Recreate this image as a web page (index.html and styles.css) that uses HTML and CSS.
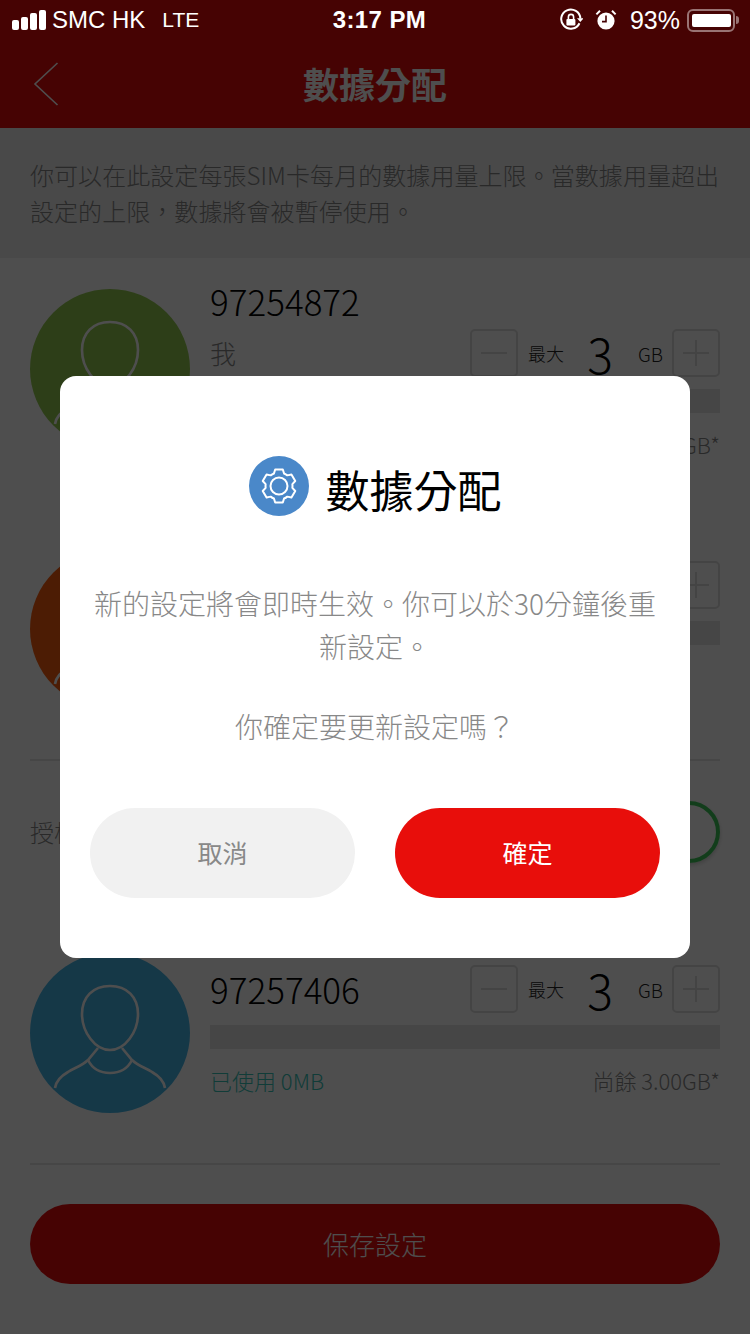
FILE: index.html
```html
<!DOCTYPE html>
<html lang="zh-Hant">
<head>
    <meta charset="UTF-8">
    <meta name="viewport" content="width=device-width, initial-scale=1.0">
    <title>數據分配</title>
    <link rel="stylesheet" href="styles.css">
</head>
<body>
    <header class="header">
        <div class="status-bar">
            <div class="status-left">
                <div class="signal"><i class="s1"></i><i class="s2"></i><i class="s3"></i><i class="s4"></i></div>
                <span class="carrier">SMC HK</span>
                <span class="network">LTE</span>
            </div>
            <div class="status-time">3:17 PM</div>
            <div class="status-right">
                <svg class="status-icon" width="24" height="24" viewBox="0 0 24 24">
                    <path d="M20.5 15.2A9.6 9.6 0 1 1 21.4 10.6" fill="none" stroke="#fff" stroke-width="2"/>
                    <path d="M18 10.2h6.6l-3.3 3.8z" fill="#fff"/>
                    <rect x="7.4" y="11" width="9" height="6.6" rx="1" fill="#fff"/>
                    <path d="M9.4 11V9a2.6 2.6 0 0 1 5.2 0v2" fill="none" stroke="#fff" stroke-width="1.6"/>
                </svg>
                <svg class="status-icon alarm" width="22" height="22" viewBox="0 0 22 22">
                    <circle cx="11" cy="12" r="8.6" fill="#fff"/>
                    <path d="M11 6.6V12.6H7" fill="none" stroke="#450204" stroke-width="1.6"/>
                    <path d="M1.4 5.4 5 1.8M20.6 5.4 17 1.8" stroke="#fff" stroke-width="2"/>
                </svg>
                <span class="battery-text">93%</span>
                <div class="battery"><div class="battery-level"></div></div>
                <div class="battery-nub"></div>
            </div>
        </div>
        <div class="nav-bar">
            <svg class="back" width="26" height="44" viewBox="0 0 26 44">
                <path d="M24.5 1 2 22l22.5 21" fill="none" stroke="#fff" stroke-width="1.6"/>
            </svg>
            <div class="nav-title">數據分配</div>
        </div>
    </header>

    <section class="intro">你可以在此設定每張SIM卡每月的數據用量上限。當數據用量超出設定的上限，數據將會被暫停使用。</section>

    <section class="card card-first">
        <div class="card-main">
            <svg class="avatar green" viewBox="0 0 160 160"><use href="#person"/></svg>
            <div class="info">
                <div class="number number-alone">97254872</div>
                <div class="row">
                    <span class="name">我</span>
                    <div class="stepper">
                        <div class="step-btn"><i class="dash"></i></div>
                        <span class="step-label">最大</span>
                        <span class="step-value">3</span>
                        <span class="step-unit">GB</span>
                        <div class="step-btn step-plus"><i class="dash"></i><i class="bar-v"></i></div>
                    </div>
                </div>
                <div class="usage-bar"></div>
                <div class="usage">
                    <span class="used">已使用 0MB</span>
                    <span class="left">尚餘 3.00GB*</span>
                </div>
            </div>
        </div>
    </section>

    <section class="card card-second">
        <div class="card-main">
            <svg class="avatar orange" viewBox="0 0 160 160"><use href="#person"/></svg>
            <div class="info info-row">
                <div class="row row-end">
                    <div class="step-btn"><i class="dash"></i><i class="bar-v"></i></div>
                </div>
                <div class="usage-bar"></div>
            </div>
        </div>
        <div class="divider"></div>
        <div class="auth-row">
            <span class="auth-label">授權</span>
            <div class="auth-ring"></div>
        </div>
    </section>

    <section class="card card-third">
        <div class="card-main">
            <svg class="avatar blue" viewBox="0 0 160 160"><use href="#person"/></svg>
            <div class="info info-row">
                <div class="row">
                    <span class="number">97257406</span>
                    <div class="stepper">
                        <div class="step-btn"><i class="dash"></i></div>
                        <span class="step-label">最大</span>
                        <span class="step-value">3</span>
                        <span class="step-unit">GB</span>
                        <div class="step-btn step-plus"><i class="dash"></i><i class="bar-v"></i></div>
                    </div>
                </div>
                <div class="usage-bar"></div>
                <div class="usage">
                    <span class="used">已使用 0MB</span>
                    <span class="left">尚餘 3.00GB*</span>
                </div>
            </div>
        </div>
        <div class="divider"></div>
        <div class="save-btn">保存設定</div>
    </section>

    <svg class="defs" width="0" height="0">
        <symbol id="person" viewBox="0 0 160 160">
            <g fill="none" stroke="#fff" stroke-width="2.6">
                <path d="M80 33c-17 0-28 11-28 28 0 18 13 36 28 36s28-18 28-36c0-17-11-28-28-28z"/>
                <path d="M68 95 58 107c-6 6-14 8-20 12-7 4-12 9-13 16M92 95l10 12c6 6 14 8 20 12 7 4 12 9 13 16"/>
                <path d="M58 107c4 8 12 13 22 13s18-5 22-13"/>
            </g>
        </symbol>
    </svg>

    <div class="overlay">
        <div class="modal">
            <div class="modal-head">
                <svg width="60" height="60" viewBox="0 0 60 60">
                    <circle cx="30" cy="30" r="30" fill="#4a88c9"/>
                    <path d="M24.94 17.48 26.18 13.44H33.82L35.06 17.48A13.5 13.5 0 0 1 38.31 19.36L42.43 18.41 46.26 25.03 43.37 28.12A13.5 13.5 0 0 1 43.37 31.88L46.26 34.97 42.43 41.59 38.31 40.64A13.5 13.5 0 0 1 35.06 42.52L33.82 46.56H26.18L24.94 42.52A13.5 13.5 0 0 1 21.69 40.64L17.57 41.59 13.74 34.97 16.63 31.88A13.5 13.5 0 0 1 16.63 28.12L13.74 25.03 17.57 18.41 21.69 19.36A13.5 13.5 0 0 1 24.94 17.48Z" fill="none" stroke="#fff" stroke-width="2" stroke-linejoin="round"/>
                    <circle cx="30" cy="30" r="8.5" fill="none" stroke="#fff" stroke-width="2"/>
                </svg>
                <div class="modal-title">數據分配</div>
            </div>
            <p class="modal-text">新的設定將會即時生效。你可以於30分鐘後重新設定。</p>
            <p class="modal-text modal-question">你確定要更新設定嗎？</p>
            <div class="modal-buttons">
                <div class="modal-btn btn-cancel">取消</div>
                <div class="modal-btn btn-ok">確定</div>
            </div>
        </div>
    </div>
</body>
</html>
```

FILE: styles.css
```css
* {
    box-sizing: border-box;
}
html, body {
    margin: 0;
    padding: 0;
}
body {
    position: relative;
    width: 750px;
    height: 1334px;
    overflow: hidden;
    background-color: #fff;
    font-family: "Noto Sans CJK TC", "Noto Sans", sans-serif;
    font-weight: 300;
    color: #888;
}

/* Header */
.header {
    height: 128px;
    background-color: #e60c0c;
}
.status-bar {
    position: relative;
    z-index: 2;
    height: 40px;
    padding: 0 11px 0 12px;
    display: flex;
    align-items: center;
    justify-content: space-between;
    color: #fff;
    font-family: "Liberation Sans", sans-serif;
    font-weight: 400;
}
.status-left {
    display: flex;
    align-items: center;
    width: 308px;
    font-size: 24px;
}
.signal {
    display: flex;
    align-items: flex-end;
    gap: 2px;
    height: 20px;
    margin-right: 6px;
}
.signal i {
    display: block;
    width: 7px;
    background-color: #fff;
    border-radius: 2px;
}
.s1 { height: 10px; }
.s2 { height: 13px; }
.s3 { height: 17px; }
.s4 { height: 20px; }
.network {
    margin-left: 17px;
    font-size: 21px;
}
.status-time {
    font-size: 24px;
    font-weight: 700;
    letter-spacing: 0.4px;
}
.status-right {
    display: flex;
    align-items: center;
    justify-content: flex-end;
    width: 300px;
}
.status-icon {
    display: block;
}
.alarm {
    margin-left: 12px;
}
.battery-text {
    margin-left: 13px;
    font-size: 25px;
}
.battery {
    width: 48px;
    height: 23px;
    margin-left: 7px;
    padding: 3px;
    border: 2px solid rgba(255, 255, 255, 0.45);
    border-radius: 6px;
}
.battery-level {
    width: 39px;
    height: 13px;
    background-color: #fff;
    border-radius: 2px;
}
.battery-nub {
    width: 3px;
    height: 8px;
    margin-left: 1px;
    background-color: rgba(255, 255, 255, 0.45);
    border-radius: 0 3px 3px 0;
}
.nav-bar {
    position: relative;
    height: 88px;
    display: flex;
    align-items: center;
    justify-content: center;
}
.back {
    position: absolute;
    left: 33px;
    top: 22px;
}
.nav-title {
    color: #fff;
    font-size: 36px;
    font-weight: 700;
    margin-top: -2px;
}

/* Intro */
.intro {
    height: 130px;
    padding: 29px 30px 0;
    background-color: #eee;
    font-size: 24px;
    line-height: 36px;
    letter-spacing: 0.06px;
}

/* Cards */
.card {
    padding: 0 30px;
    background-color: #fff;
}
.card-first {
    height: 231px;
    padding-top: 25px;
}
.card-second {
    height: 383px;
    margin-top: 20px;
    padding-top: 40px;
}
.card-third {
    height: 422px;
    margin-top: 20px;
    padding-top: 41px;
}
.card-main {
    display: flex;
    gap: 20px;
    margin-bottom: 50px;
}
.avatar {
    flex: none;
    width: 160px;
    height: 160px;
    border-radius: 50%;
}
.card-first .avatar {
    margin-top: 6px;
}
.green { background-color: #93cb50; }
.orange { background-color: #f75d0d; }
.blue { background-color: #46b7e9; }
.defs {
    position: absolute;
}
.info {
    flex: 1;
    min-width: 0;
}
.info-row {
    padding-top: 12px;
}
.number {
    color: #000;
    font-size: 35px;
    line-height: 46px;
}
.number-alone {
    height: 46px;
    line-height: 36px;
}
.row {
    display: flex;
    align-items: center;
    justify-content: space-between;
    height: 48px;
}
.row-end {
    justify-content: flex-end;
}
.name {
    font-size: 26px;
    margin-top: -2px;
}
.stepper {
    display: flex;
    align-items: center;
    width: 250px;
    height: 48px;
    color: #222;
}
.step-btn {
    position: relative;
    flex: none;
    width: 48px;
    height: 48px;
    border: 2px solid #ddd;
    border-radius: 5px;
}
.dash {
    position: absolute;
    left: 9px;
    right: 9px;
    top: 21px;
    height: 2px;
    background-color: #ddd;
}
.bar-v {
    position: absolute;
    top: 9px;
    bottom: 9px;
    left: 21px;
    width: 2px;
    background-color: #ddd;
}
.step-plus {
    margin-left: auto;
}
.step-label {
    margin-left: 10px;
    font-size: 18px;
}
.step-value {
    width: 50px;
    margin-left: 11px;
    color: #000;
    font-size: 48px;
    line-height: 46px;
    text-align: center;
}
.step-unit {
    margin-left: 13px;
    font-size: 19px;
}
.usage-bar {
    height: 24px;
    margin-top: 12px;
    background-color: #e3e3e3;
}
.usage {
    display: flex;
    justify-content: space-between;
    margin-top: 13px;
    font-size: 22px;
    line-height: 36px;
}
.used {
    color: #38c4b8;
}
.divider {
    height: 2px;
    background-color: #e3e3e3;
}
.auth-row {
    display: flex;
    align-items: center;
    justify-content: space-between;
    height: 131px;
    padding-top: 10px;
}
.auth-label {
    font-size: 24px;
}
.auth-ring {
    width: 62px;
    height: 62px;
    border: 4px solid #3dc85a;
    border-radius: 50%;
    box-shadow: 0 2px 4px rgba(0, 0, 0, 0.2);
}
.save-btn {
    height: 80px;
    margin-top: 39px;
    border-radius: 40px;
    background-color: #e60c0c;
    color: #fff;
    font-size: 26px;
    line-height: 80px;
    text-align: center;
}

/* Dialog */
.overlay {
    position: absolute;
    inset: 0;
    z-index: 1;
    display: flex;
    align-items: center;
    justify-content: center;
    background-color: rgba(0, 0, 0, 0.695);
}
.modal {
    width: 630px;
    height: 582px;
    padding: 80px 30px 60px;
    background-color: #fff;
    border-radius: 16px;
}
.modal-head {
    display: flex;
    align-items: center;
    justify-content: center;
    gap: 17px;
    height: 60px;
}
.modal-title {
    color: #000;
    font-size: 44px;
    font-weight: 400;
    line-height: 60px;
    margin-top: 5px;
}
.modal-text {
    margin: 66px 0 0;
    font-size: 28px;
    line-height: 43px;
    text-align: center;
}
.modal-question {
    margin-top: 37px;
}
.modal-buttons {
    display: flex;
    gap: 40px;
    margin-top: 60px;
}
.modal-btn {
    flex: 1;
    height: 90px;
    border-radius: 45px;
    font-size: 25px;
    font-weight: 400;
    line-height: 88px;
    text-align: center;
}
.btn-cancel {
    background-color: #f1f1f1;
    color: #888;
}
.btn-ok {
    background-color: #e80e0b;
    color: #fff;
}
```
